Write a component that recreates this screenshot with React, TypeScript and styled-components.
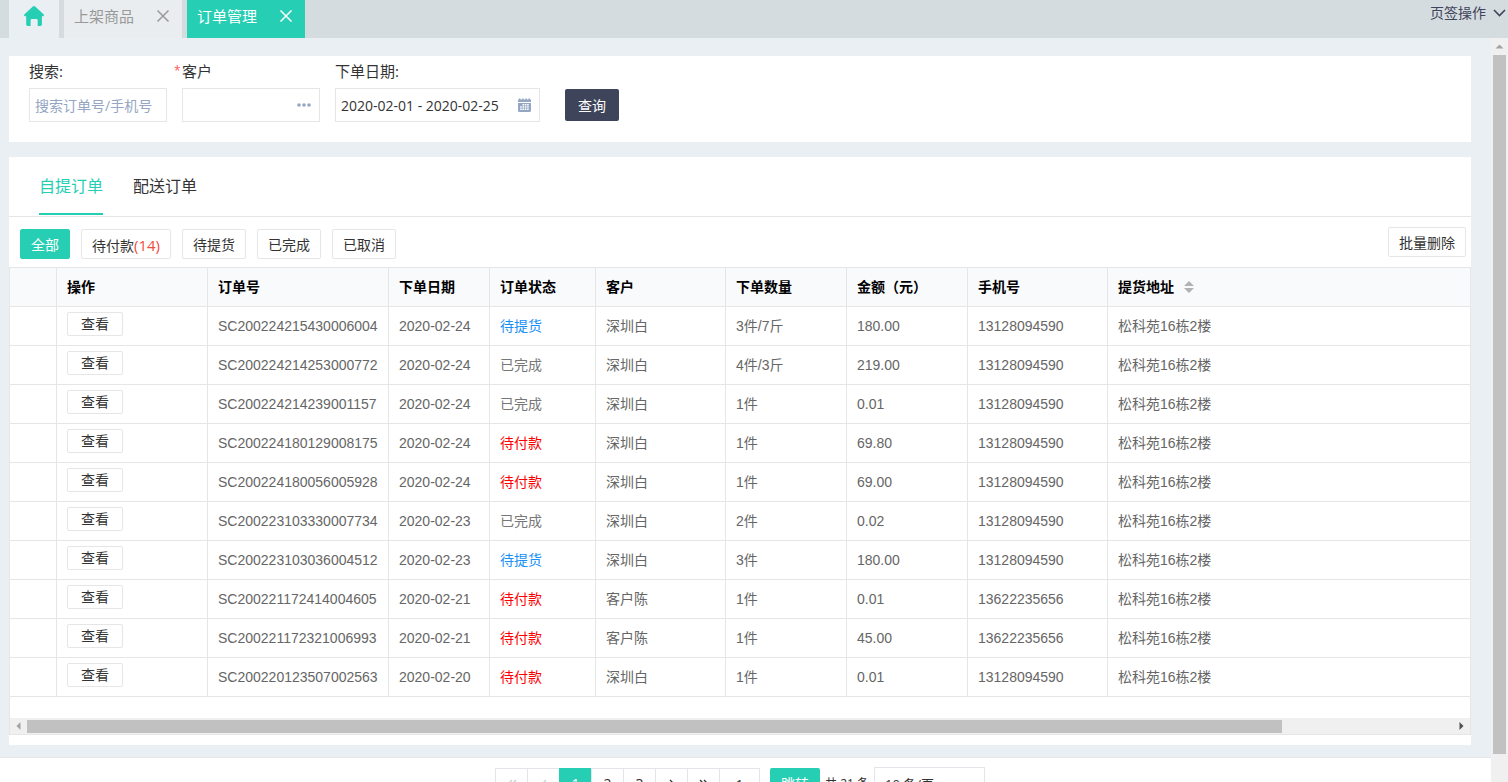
import React from "react";
import styled, { createGlobalStyle, css } from "styled-components";

const teal = "#26ceb4";
const line = "#e6e6e6";
const canvas = "#eaeff4";
const muted = "#94a6c3";
const uiFont = `"Open Sans", "Noto Sans CJK SC", sans-serif`;
const dataFont = `"Liberation Sans", "Noto Sans CJK SC", sans-serif`;

const GlobalStyle = createGlobalStyle`
  *, *::before, *::after { box-sizing: border-box; }
  body { margin: 0; background: #fff; color: #333; font: 14px/20px ${uiFont}; }
  button, input, select { font: inherit; color: inherit; margin: 0; }
  button { cursor: pointer; white-space: nowrap; }
`;

const Shell = styled.div`
  display: flex;
  flex-direction: column;
  height: 100vh;
  overflow: hidden;
`;

/* Window tabs */
const TabBar = styled.header`
  display: flex;
  flex: none;
  gap: 5px;
  height: 38px;
  padding-left: 9px;
  background: #d5dce0;
`;

const HomeTab = styled.button`
  width: 50px;
  padding: 0 0 6px;
  border: 0;
  background: ${canvas};
  svg { display: block; margin: 0 auto; }
`;

const PageTab = styled.div<{ $active?: boolean }>`
  display: flex;
  align-items: center;
  justify-content: space-between;
  width: 118px;
  padding: 0 12px 7px 10px;
  font-size: 15px;
  color: ${(p) => (p.$active ? "#fff" : "#999")};
  background: ${(p) => (p.$active ? teal : "#e9edf0")};
`;

const CloseButton = styled.button`
  display: flex;
  padding: 0;
  border: 0;
  background: none;
`;

const TabActions = styled.button`
  display: flex;
  align-items: center;
  gap: 7px;
  height: 26px;
  margin-left: auto;
  padding: 0 2px 0 0;
  border: 0;
  background: none;
  color: #3e4459;
`;

/* Body and page scrollbar */
const Body = styled.div`
  display: flex;
  flex: 1;
  min-height: 0;
`;

const Main = styled.main`
  flex: 1;
  min-width: 0;
  overflow: hidden;
  background: ${canvas};
`;

const Content = styled.div`
  display: flex;
  flex-direction: column;
  gap: 15px;
  padding: 18px 20px 12px 9px;
`;

const Card = styled.section`
  background: #fff;
`;

const PageScroll = styled.div`
  display: flex;
  flex: none;
  flex-direction: column;
  align-items: center;
  width: 17px;
  background: #f0f0f0;
  svg { flex: none; }
`;

const PageThumb = styled.div`
  width: 13px;
  height: 94%;
  background: #c1c1c1;
`;

/* Search form */
const SearchForm = styled.form`
  display: flex;
  align-items: flex-end;
  gap: 15px;
  padding: 0 20px 20px;
`;

const Field = styled.div<{ $width: number }>`
  width: ${(p) => p.$width}px;
`;

const FieldLabel = styled.label<{ $required?: boolean }>`
  display: flex;
  height: 32px;
  font-size: 15px;
  line-height: 30px;
  ${(p) =>
    p.$required &&
    css`
      margin-left: -8px;
      &::before { content: "*"; width: 8px; color: #ff5b5b; font-size: 12px; }
    `}
`;

const InputBox = styled.div`
  display: flex;
  align-items: center;
  height: 34px;
  padding: 0 8px 0 5px;
  border: 1px solid ${line};
  background: #fff;
`;

const TextInput = styled.input`
  flex: 1;
  width: 100%;
  min-width: 0;
  padding: 2px 0 0;
  border: 0;
  outline: 0;
  background: none;
  &::placeholder { color: ${muted}; opacity: 1; }
`;

const AddonButton = styled.button`
  display: flex;
  flex: none;
  padding: 0;
  border: 0;
  background: none;
  color: ${muted};
`;

const QueryButton = styled.button`
  height: 32px;
  margin: 0 0 1px 10px;
  padding: 2px 13px 0;
  border: 0;
  border-radius: 2px;
  background: #3e4459;
  color: #fff;
`;

/* Order kind tabs */
const KindTabs = styled.nav`
  display: flex;
  gap: 30px;
  height: 60px;
  padding: 0 30px;
  border-bottom: 1px solid ${line};
`;

const KindTab = styled.button<{ $active?: boolean }>`
  height: 58px;
  padding: 2px 0 0;
  border: 0;
  border-bottom: 2px solid ${(p) => (p.$active ? teal : "transparent")};
  background: none;
  color: ${(p) => (p.$active ? teal : "#333")};
  font-size: 16px;
`;

const Toolbar = styled.div`
  display: flex;
  justify-content: space-between;
  align-items: flex-start;
  height: 50px;
  padding: 10px 5px 0 11px;
`;

const StatusFilters = styled.div`
  display: flex;
  gap: 11px;
  padding-top: 2px;
`;

const OutlineButton = styled.button<{ $active?: boolean }>`
  height: 30px;
  padding: 2px 10px 0;
  border: 1px solid ${(p) => (p.$active ? teal : line)};
  border-radius: 2px;
  background: ${(p) => (p.$active ? teal : "#fff")};
  color: ${(p) => (p.$active ? "#fff" : "#333")};
`;

const Count = styled.span`
  color: #f44a3e;
  font-size: 15px;
`;

/* Orders table */
const TableFrame = styled.div`
  border: 1px solid ${line};
`;

const TableView = styled.div`
  overflow: hidden;
  padding-bottom: 21px;
`;

const OrderTable = styled.table`
  width: 100%;
  border-collapse: separate;
  border-spacing: 0;
  table-layout: fixed;
  font: 14px/20px ${dataFont};
  color: #666;
`;

const cell = css`
  height: 39px;
  padding: 0 10px;
  border-bottom: 1px solid ${line};
  text-align: left;
  white-space: nowrap;
  &:not(:last-child) { border-right: 1px solid ${line}; }
`;

const HeadCell = styled.th`
  ${cell}
  background: #f9fafc;
  color: #000;
  font-weight: bold;
`;

const HeadLabel = styled.span`
  display: inline-flex;
  align-items: center;
  gap: 10px;
`;

const Cell = styled.td`
  ${cell}
`;

const ActionCell = styled.td`
  ${cell}
  padding-top: 5px;
  vertical-align: top;
`;

const ViewButton = styled.button`
  display: block;
  width: 56px;
  height: 24px;
  padding: 0;
  border: 1px solid ${line};
  border-radius: 2px;
  background: #fff;
  color: #333;
  line-height: 20px;
`;

type StatusName = "待提货" | "已完成" | "待付款";

const statusColors: Record<StatusName, string> = {
  待提货: "#1890f5",
  已完成: "#777",
  待付款: "#f00",
};

const Status = styled.span<{ $status: StatusName }>`
  color: ${(p) => statusColors[p.$status]};
`;

const TableScroll = styled.div`
  display: flex;
  align-items: center;
  height: 16px;
  background: #f0f0f0;
  svg { flex: none; }
`;

const TableTrack = styled.div`
  flex: 1;
`;

const TableThumb = styled.div`
  width: 88%;
  height: 13px;
  background: #c1c1c1;
`;

const TableFoot = styled.div`
  height: 10px;
`;

/* Pagination */
const Footer = styled.footer`
  display: flex;
  justify-content: center;
  align-items: center;
  padding: 9px 11px 10px 0;
  border-top: 1px solid ${line};
  background: #fff;
`;

const Pages = styled.nav`
  display: flex;
`;

const PageButton = styled.button<{ $active?: boolean }>`
  width: 33px;
  height: 32px;
  padding: 0;
  border: 1px solid ${(p) => (p.$active ? teal : "#e2e5ea")};
  background: ${(p) => (p.$active ? teal : "#fff")};
  color: ${(p) => (p.$active ? "#fff" : "#333")};
  & + & { margin-left: -1px; }
  &:disabled { color: #ccc; }
`;

const PageInput = styled.input`
  width: 41px;
  height: 32px;
  margin-left: -1px;
  padding: 0;
  border: 1px solid #e2e5ea;
  text-align: center;
`;

const JumpButton = styled.button`
  height: 32px;
  margin: 0 5px 0 10px;
  padding: 0 11px;
  border: 0;
  border-radius: 2px;
  background: ${teal};
  color: #fff;
`;

const Total = styled.span`
  font-size: 12px;
`;

const PageSize = styled.select`
  width: 111px;
  height: 34px;
  margin-left: 5px;
  padding: 0 10px;
  border: 1px solid #e2e5ea;
  appearance: none;
  background: #fff;
  font-size: 13px;
`;

const HomeIcon = () => (
  <svg width="22" height="22" viewBox="0 0 22 22" fill={teal} aria-hidden="true">
    <path d="M9.8 1.5a1.7 1.7 0 0 1 2.4 0l8.3 7.7c.9.9.5 2-.7 2h-.9v8.1c0 1.2-.5 1.7-1.6 1.7h-2.6v-5.4c0-1-.5-1.5-1.4-1.5H9.1c-1 0-1.5.5-1.5 1.5V21H4.9c-1.1 0-1.7-.5-1.7-1.7v-8.1h-.9c-1.2 0-1.7-1.1-.8-2z" />
  </svg>
);

const CloseIcon = () => (
  <svg width="14" height="14" viewBox="0 0 14 14" fill="none" stroke="currentColor" strokeWidth="1.5" aria-hidden="true">
    <path d="M1.5 1.5l11 11M12.5 1.5l-11 11" />
  </svg>
);

const ChevronIcon = () => (
  <svg width="13" height="8" viewBox="0 0 13 8" fill="none" stroke="currentColor" strokeWidth="1.6" aria-hidden="true">
    <path d="M1 1l5.5 5.5L12 1" />
  </svg>
);

const DotsIcon = () => (
  <svg width="14" height="4" viewBox="0 0 14 4" fill="currentColor" aria-hidden="true">
    <circle cx="2" cy="2" r="1.8" />
    <circle cx="7" cy="2" r="1.8" />
    <circle cx="12" cy="2" r="1.8" />
  </svg>
);

const CalendarIcon = () => (
  <svg width="13" height="14" viewBox="0 0 13 14" aria-hidden="true">
    <path
      d="M0 1.500h1v-1h1.500v1h1.700v-1h1.500v1h1.600v-1h1.500v1h1.700v-1H12v1h1V4H0zM0 5h13v7.500a1.500 1.500 0 0 1-1.500 1.500h-10A1.500 1.500 0 0 1 0 12.500z"
      fill="currentColor"
    />
    <path
      d="M4.500 6h1.600v1.500H4.500zM6.800 6h1.600v1.500H6.800zM9.100 6h1.600v1.500H9.100zM2.200 8.200h1.600v1.500H2.200zM4.500 8.200h1.600v1.500H4.500zM6.800 8.200h1.600v1.500H6.800zM9.100 8.200h1.600v1.500H9.100zM2.200 10.400h1.600v1.500H2.200zM4.500 10.400h1.600v1.500H4.500zM6.800 10.400h1.600v1.500H6.800zM9.100 10.400h1.600v1.500H9.100z"
      fill="#fff"
    />
  </svg>
);

const SortIcon = () => (
  <svg width="10" height="12" viewBox="0 0 10 12" fill="#b2b2b2" aria-hidden="true">
    <path d="M5 0l5 5H0zM5 12L0 7h10z" />
  </svg>
);

const arrowPaths = {
  up: "M8.500 6.500l4 4h-8z",
  left: "M6.500 8l4-4v8z",
  right: "M10.500 8l-4-4v8z",
};

const ScrollArrow = ({ dir, color = "#a3a3a3" }: { dir: keyof typeof arrowPaths; color?: string }) => (
  <svg width="17" height="17" viewBox="0 0 17 17" fill={color} aria-hidden="true">
    <path d={arrowPaths[dir]} />
  </svg>
);

const PagerIcon = ({ d }: { d: string }) => (
  <svg width="12" height="10" viewBox="0 0 12 10" fill="none" stroke="currentColor" strokeWidth="1.300" aria-hidden="true">
    <path d={d} />
  </svg>
);

const columnWidths = [47, 151, 181, 101, 106, 130, 121, 121, 140];
const headings = ["", "操作", "订单号", "下单日期", "订单状态", "客户", "下单数量", "金额（元）", "手机号"];

type Order = [string, string, StatusName, string, string, string, string];

const orders: Order[] = [
  ["SC200224215430006004", "2020-02-24", "待提货", "深圳白", "3件/7斤", "180.00", "13128094590"],
  ["SC200224214253000772", "2020-02-24", "已完成", "深圳白", "4件/3斤", "219.00", "13128094590"],
  ["SC200224214239001157", "2020-02-24", "已完成", "深圳白", "1件", "0.01", "13128094590"],
  ["SC200224180129008175", "2020-02-24", "待付款", "深圳白", "1件", "69.80", "13128094590"],
  ["SC200224180056005928", "2020-02-24", "待付款", "深圳白", "1件", "69.00", "13128094590"],
  ["SC200223103330007734", "2020-02-23", "已完成", "深圳白", "2件", "0.02", "13128094590"],
  ["SC200223103036004512", "2020-02-23", "待提货", "深圳白", "3件", "180.00", "13128094590"],
  ["SC200221172414004605", "2020-02-21", "待付款", "客户陈", "1件", "0.01", "13622235656"],
  ["SC200221172321006993", "2020-02-21", "待付款", "客户陈", "1件", "45.00", "13622235656"],
  ["SC200220123507002563", "2020-02-20", "待付款", "深圳白", "1件", "0.01", "13128094590"],
];

export default function App() {
  return (
    <Shell>
      <GlobalStyle />
      <TabBar>
        <HomeTab aria-label="首页"><HomeIcon /></HomeTab>
        <PageTab>
          上架商品
          <CloseButton aria-label="关闭上架商品"><CloseIcon /></CloseButton>
        </PageTab>
        <PageTab $active>
          订单管理
          <CloseButton aria-label="关闭订单管理"><CloseIcon /></CloseButton>
        </PageTab>
        <TabActions>页签操作<ChevronIcon /></TabActions>
      </TabBar>
      <Body>
        <Main>
          <Content>
            <Card>
              <SearchForm onSubmit={(e) => e.preventDefault()}>
                <Field $width={138}>
                  <FieldLabel htmlFor="keyword">搜索:</FieldLabel>
                  <InputBox>
                    <TextInput id="keyword" placeholder="搜索订单号/手机号" />
                  </InputBox>
                </Field>
                <Field $width={138}>
                  <FieldLabel htmlFor="customer" $required>客户</FieldLabel>
                  <InputBox>
                    <TextInput id="customer" />
                    <AddonButton type="button" aria-label="选择客户"><DotsIcon /></AddonButton>
                  </InputBox>
                </Field>
                <Field $width={205}>
                  <FieldLabel htmlFor="dates">下单日期:</FieldLabel>
                  <InputBox>
                    <TextInput id="dates" defaultValue="2020-02-01 - 2020-02-25" />
                    <AddonButton type="button" aria-label="选择日期"><CalendarIcon /></AddonButton>
                  </InputBox>
                </Field>
                <QueryButton type="submit">查询</QueryButton>
              </SearchForm>
            </Card>
            <Card>
              <KindTabs>
                <KindTab $active>自提订单</KindTab>
                <KindTab>配送订单</KindTab>
              </KindTabs>
              <Toolbar>
                <StatusFilters>
                  <OutlineButton $active>全部</OutlineButton>
                  <OutlineButton>待付款<Count>(14)</Count></OutlineButton>
                  <OutlineButton>待提货</OutlineButton>
                  <OutlineButton>已完成</OutlineButton>
                  <OutlineButton>已取消</OutlineButton>
                </StatusFilters>
                <OutlineButton>批量删除</OutlineButton>
              </Toolbar>
              <TableFrame>
                <TableView>
                  <OrderTable>
                    <colgroup>
                      {columnWidths.map((w, i) => <col key={i} width={w} />)}
                      <col />
                    </colgroup>
                    <thead>
                      <tr>
                        {headings.map((h, i) => <HeadCell key={i}>{h}</HeadCell>)}
                        <HeadCell><HeadLabel>提货地址<SortIcon /></HeadLabel></HeadCell>
                      </tr>
                    </thead>
                    <tbody>
                      {orders.map(([id, date, status, customer, quantity, amount, phone]) => (
                        <tr key={id}>
                          <Cell />
                          <ActionCell><ViewButton>查看</ViewButton></ActionCell>
                          <Cell>{id}</Cell>
                          <Cell>{date}</Cell>
                          <Cell><Status $status={status}>{status}</Status></Cell>
                          <Cell>{customer}</Cell>
                          <Cell>{quantity}</Cell>
                          <Cell>{amount}</Cell>
                          <Cell>{phone}</Cell>
                          <Cell>松科苑16栋2楼</Cell>
                        </tr>
                      ))}
                    </tbody>
                  </OrderTable>
                </TableView>
                <TableScroll>
                  <ScrollArrow dir="left" />
                  <TableTrack><TableThumb /></TableTrack>
                  <ScrollArrow dir="right" color="#505050" />
                </TableScroll>
              </TableFrame>
              <TableFoot />
            </Card>
          </Content>
          <Footer>
            <Pages aria-label="分页">
              <PageButton disabled aria-label="首页"><PagerIcon d="M6 1L2 5l4 4M10 1L6 5l4 4" /></PageButton>
              <PageButton disabled aria-label="上一页"><PagerIcon d="M8 1L4 5l4 4" /></PageButton>
              <PageButton $active>1</PageButton>
              <PageButton>2</PageButton>
              <PageButton>3</PageButton>
              <PageButton aria-label="下一页"><PagerIcon d="M4 1l4 4-4 4" /></PageButton>
              <PageButton aria-label="末页"><PagerIcon d="M2 1l4 4-4 4M6 1l4 4-4 4" /></PageButton>
            </Pages>
            <PageInput aria-label="页码" defaultValue="1" />
            <JumpButton>跳转</JumpButton>
            <Total>共 21 条</Total>
            <PageSize aria-label="每页条数" defaultValue="10">
              <option value="10">10 条/页</option>
              <option value="20">20 条/页</option>
            </PageSize>
          </Footer>
        </Main>
        <PageScroll>
          <ScrollArrow dir="up" />
          <PageThumb />
        </PageScroll>
      </Body>
    </Shell>
  );
}
